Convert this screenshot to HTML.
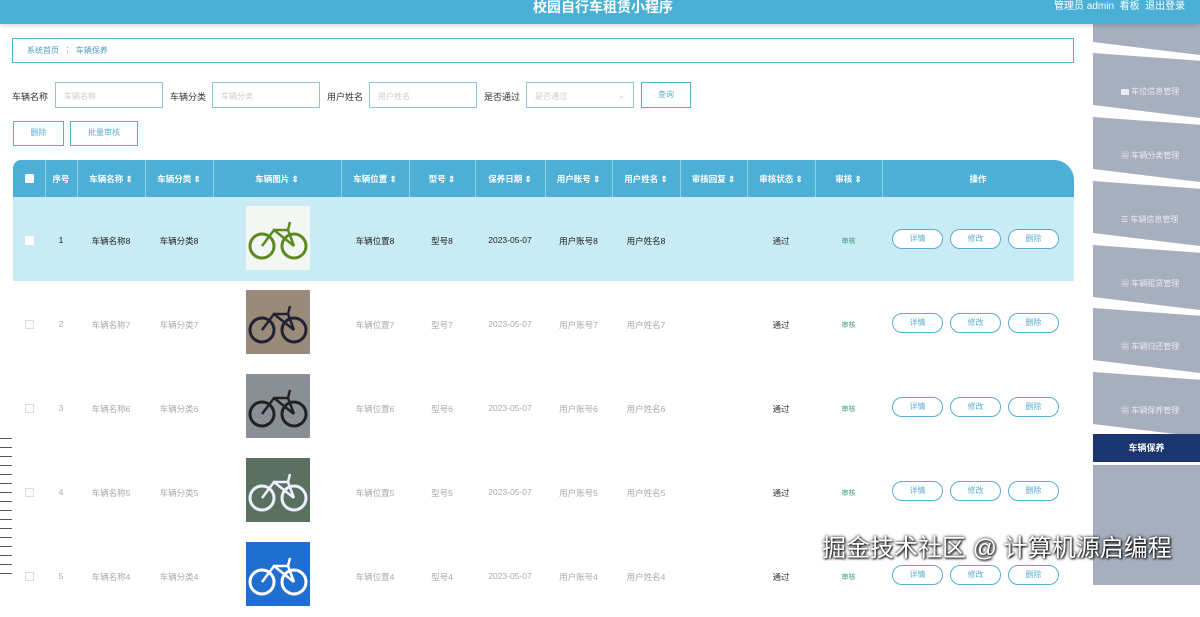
<!DOCTYPE html>
<html><head><meta charset="utf-8"><style>
*{margin:0;padding:0;box-sizing:border-box}
body{width:1200px;height:578px;overflow:hidden;background:#fff;font-family:"Liberation Sans","Noto Sans CJK SC",sans-serif;position:relative;font-size:9px;color:#333}
.top{position:absolute;left:0;top:0;width:1200px;height:24px;background:#4ab0d6;box-shadow:0 2px 4px rgba(0,0,0,.15);z-index:5}
.top .t{position:absolute;left:533px;top:-3px;color:#fff;font-size:14px;font-weight:bold}
.top .r{position:absolute;left:1054px;top:-3px;color:#fff;font-size:10px;white-space:nowrap}
.bc{position:absolute;left:12px;top:38px;width:1062px;height:25px;border:1.5px solid #5aaed0;color:#4a9cc0;font-size:8px;padding:6px 14px}
.lbl{position:absolute;top:90px;font-size:9px;color:#333}
.inp{position:absolute;top:82px;height:26px;border:1px solid #8cc6de;color:#ccc;font-size:8px;padding:8px}
.btn{position:absolute;border:1.5px solid #5aaed0;color:#5aaed0;font-size:8px;text-align:center;background:#fff}
.tbl{position:absolute;left:13px;top:160px;width:1061px}
.hd{position:absolute;left:0;top:0;width:1061px;height:37px;background:#4bafd6;border-top-right-radius:20px;border-top-left-radius:8px}
.c{position:absolute;text-align:center;font-size:8.5px}
.hc{color:#fff;font-weight:bold;top:13px}
.vl{position:absolute;top:0;width:1px;height:37px;background:#8fd0e8}
.ob{position:absolute;height:20px;width:51px;border:1.5px solid #5aaed0;border-radius:10px;color:#5aaed0;font-size:8px;text-align:center;line-height:17px;background:#fff}
.side{position:absolute;left:1093px;width:107px;background:#a7afbf;clip-path:polygon(0 0,100% 12%,100% 100%,0 80%);color:#e8ebf0;font-size:8px}
.side span{position:absolute;left:28px;top:33px}
</style></head><body>
<div class="top"><div class="t">校园自行车租赁小程序</div><div class="r">管理员 admin &nbsp;看板 &nbsp;退出登录</div></div>
<div class="bc">系统首页 &nbsp;⋮&nbsp; 车辆保养</div>

<div class="lbl" style="left:12px">车辆名称</div><div class="inp" style="left:55px;width:108px">车辆名称</div>
<div class="lbl" style="left:170px">车辆分类</div><div class="inp" style="left:212px;width:108px">车辆分类</div>
<div class="lbl" style="left:327px">用户姓名</div><div class="inp" style="left:369px;width:108px">用户姓名</div>
<div class="lbl" style="left:484px">是否通过</div><div class="inp" style="left:526px;width:108px">是否通过<span style="float:right">⌄</span></div>
<div class="btn" style="left:641px;top:82px;width:50px;height:26px;line-height:23px">查询</div>
<div class="btn" style="left:13px;top:121px;width:51px;height:25px;line-height:22px">删除</div>
<div class="btn" style="left:70px;top:121px;width:68px;height:25px;line-height:22px">批量审核</div>

<div class="side" style="top:-10px;height:65px"></div>
<div class="side" style="top:53px;height:65px"><span>▆ 车位信息管理</span></div>
<div class="side" style="top:117px;height:65px"><span>▦ 车辆分类管理</span></div>
<div class="side" style="top:181px;height:65px"><span>☰ 车辆信息管理</span></div>
<div class="side" style="top:245px;height:65px"><span>▦ 车辆租赁管理</span></div>
<div class="side" style="top:308px;height:65px"><span>▦ 车辆归还管理</span></div>
<div class="side" style="top:372px;height:65px"><span>▦ 车辆保养管理</span></div>
<div style="position:absolute;left:1093px;top:434px;width:107px;height:28px;background:#1a3570;color:#fff;font-size:9px;text-align:center;line-height:28px;font-weight:bold">车辆保养</div>
<div class="side" style="top:465px;height:120px;clip-path:none"></div>

<div class="tbl">
<div class="hd"></div>
<div class="vl" style="left:32px"></div><div class="vl" style="left:64px"></div><div class="vl" style="left:132px"></div><div class="vl" style="left:200px"></div><div class="vl" style="left:328px"></div><div class="vl" style="left:396px"></div><div class="vl" style="left:462px"></div><div class="vl" style="left:532px"></div><div class="vl" style="left:599px"></div><div class="vl" style="left:667px"></div><div class="vl" style="left:734px"></div><div class="vl" style="left:802px"></div><div class="vl" style="left:869px"></div>
<div style="position:absolute;left:12px;top:14px;width:9px;height:9px;background:#fff;border-radius:1px"></div>
<div class="c hc" style="left:32px;width:32px">序号</div>
<div class="c hc" style="left:64px;width:68px">车辆名称 ⇕</div>
<div class="c hc" style="left:132px;width:68px">车辆分类 ⇕</div>
<div class="c hc" style="left:200px;width:128px">车辆图片 ⇕</div>
<div class="c hc" style="left:328px;width:68px">车辆位置 ⇕</div>
<div class="c hc" style="left:396px;width:66px">型号 ⇕</div>
<div class="c hc" style="left:462px;width:70px">保养日期 ⇕</div>
<div class="c hc" style="left:532px;width:67px">用户账号 ⇕</div>
<div class="c hc" style="left:599px;width:68px">用户姓名 ⇕</div>
<div class="c hc" style="left:667px;width:67px">审核回复 ⇕</div>
<div class="c hc" style="left:734px;width:68px">审核状态 ⇕</div>
<div class="c hc" style="left:802px;width:67px">审核 ⇕</div>
<div class="c hc" style="left:869px;width:192px">操作</div>
</div>

<div id="rows"></div>
<script>
var imgs=['#f4f6f4','#9a8a7a','#8a8f95','#5a7060','#1f6fd0'];
var fg=['#5a8a20','#223','#222','#eef','#fff'];
var h='';
for(var i=0;i<5;i++){
 var y=197+i*84, sel=i==0, col=sel?'#222':'#aaa';
 h+='<div style="position:absolute;left:13px;top:'+y+'px;width:1061px;height:84px;background:'+(sel?'#c9ebf5':'#fff')+'"></div>';
 var cy=y+38, n=8-i;
 h+='<div style="position:absolute;left:25px;top:'+(cy+1)+'px;width:9px;height:9px;border:1px solid '+(sel?'#fff':'#ddd')+';background:#fff"></div>';
 var cells=[[45,32,(i+1)],[77,68,'车辆名称'+n],[145,68,'车辆分类'+n],[341,68,'车辆位置'+n],[409,66,'型号'+n],[475,70,'2023-05-07'],[545,67,'用户账号'+n],[612,68,'用户姓名'+n],[747,68,'通过']];
 cells.forEach(function(c,k){h+='<div class="c" style="left:'+c[0]+'px;width:'+c[1]+'px;top:'+cy+'px;color:'+(k==8?'#333':col)+'">'+c[2]+'</div>';});
 h+='<div class="c" style="left:815px;width:67px;top:'+(cy+1)+'px;color:#3aa070;font-size:7px">审核</div>';
 h+='<svg style="position:absolute;left:246px;top:'+(y+9)+'px" width="64" height="64"><rect width="64" height="64" fill="'+imgs[i]+'"/><circle cx="16" cy="40" r="12" fill="none" stroke="'+fg[i]+'" stroke-width="3"/><circle cx="48" cy="40" r="12" fill="none" stroke="'+fg[i]+'" stroke-width="3"/><path d="M16 40L28 24L48 40M28 24L42 24L48 40M42 24L44 16" fill="none" stroke="'+fg[i]+'" stroke-width="2.5"/></svg>';
 ['详情','修改','删除'].forEach(function(t,k){h+='<div class="ob" style="left:'+(892+k*58)+'px;top:'+(y+32)+'px">'+t+'</div>';});
}
document.getElementById('rows').innerHTML=h;
</script>
<div style="position:absolute;left:0;top:430px;width:12px;height:148px;background:repeating-linear-gradient(#fff 0 8px,#556 8px 9px)"></div>
<div style="position:absolute;left:822px;top:528px;color:#fff;font-size:24px;text-shadow:0 0 3px #000,1px 1px 2px #000;white-space:nowrap">掘金技术社区 @ 计算机源启编程</div>
</body></html>
